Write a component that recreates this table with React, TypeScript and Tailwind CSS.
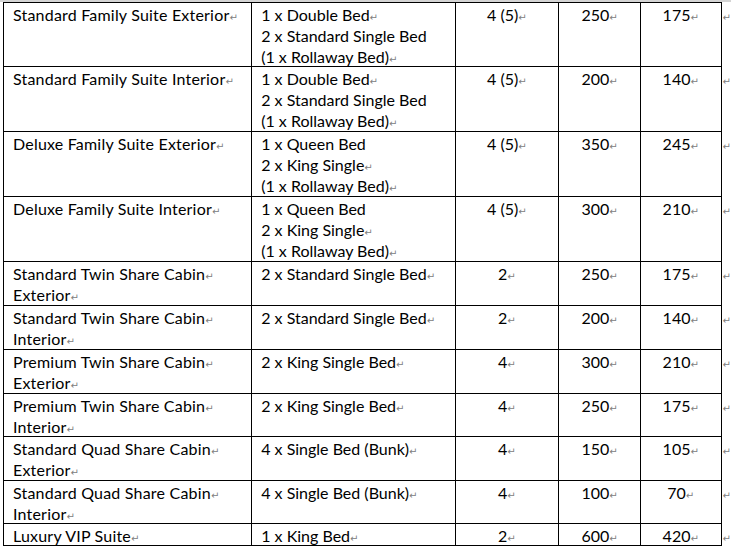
type Line = [string, boolean];

type Row = {
  name: Line[];
  beds: Line[];
  cap: string;
  price: string;
  rate: string;
  h: string;
};

const rows: Row[] = [
  {
    name: [["Standard Family Suite Exterior", true]],
    beds: [["1 x Double Bed", true], ["2 x Standard Single Bed", false], ["(1 x Rollaway Bed)", true]],
    cap: "4 (5)", price: "250", rate: "175", h: "h-[65px]",
  },
  {
    name: [["Standard Family Suite Interior", true]],
    beds: [["1 x Double Bed", true], ["2 x Standard Single Bed", false], ["(1 x Rollaway Bed)", true]],
    cap: "4 (5)", price: "200", rate: "140", h: "h-[65px]",
  },
  {
    name: [["Deluxe Family Suite Exterior", true]],
    beds: [["1 x Queen Bed", false], ["2 x King Single", true], ["(1 x Rollaway Bed)", true]],
    cap: "4 (5)", price: "350", rate: "245", h: "h-[65px]",
  },
  {
    name: [["Deluxe Family Suite Interior", true]],
    beds: [["1 x Queen Bed", false], ["2 x King Single", true], ["(1 x Rollaway Bed)", true]],
    cap: "4 (5)", price: "300", rate: "210", h: "h-[65px]",
  },
  {
    name: [["Standard Twin Share Cabin", true], ["Exterior", true]],
    beds: [["2 x Standard Single Bed", true]],
    cap: "2", price: "250", rate: "175", h: "h-[44px]",
  },
  {
    name: [["Standard Twin Share Cabin", true], ["Interior", true]],
    beds: [["2 x Standard Single Bed", true]],
    cap: "2", price: "200", rate: "140", h: "h-[44px]",
  },
  {
    name: [["Premium Twin Share Cabin", true], ["Exterior", true]],
    beds: [["2 x King Single Bed", true]],
    cap: "4", price: "300", rate: "210", h: "h-[44px]",
  },
  {
    name: [["Premium Twin Share Cabin", true], ["Interior", true]],
    beds: [["2 x King Single Bed", true]],
    cap: "4", price: "250", rate: "175", h: "h-[43px]",
  },
  {
    name: [["Standard Quad Share Cabin", true], ["Exterior", true]],
    beds: [["4 x Single Bed (Bunk)", true]],
    cap: "4", price: "150", rate: "105", h: "h-[44px]",
  },
  {
    name: [["Standard Quad Share Cabin", true], ["Interior", true]],
    beds: [["4 x Single Bed (Bunk)", true]],
    cap: "4", price: "100", rate: "70", h: "h-[43px]",
  },
  {
    name: [["Luxury VIP Suite", true]],
    beds: [["1 x King Bed", true]],
    cap: "2", price: "600", rate: "420", h: "h-[22px]",
  },
];

// paragraph mark, as Word shows it
const Mark = () => (
  <span className="text-[10px] leading-[0] text-[#808080] font-['DejaVu_Sans',sans-serif]">↵</span>
);

const Lines = ({ lines }: { lines: Line[] }) => (
  <>
    {lines.map(([text, mark], i) => (
      <div key={i} className="whitespace-nowrap h-[21px]">
        {text}
        {mark && <Mark />}
      </div>
    ))}
  </>
);

export default function App() {
  return (
    <div className="w-[731px] h-[547px] overflow-hidden bg-white text-black font-['Lato',sans-serif] text-[16px] leading-[21px]">
      <div className="h-[2px] bg-[#d4d4d4]" />
      {rows.map((row, i) => {
        const top = i === 0 ? "border-t" : "";
        return (
          <div key={i} className="flex">
            <div className={`${row.h} ${top} w-[250px] ml-[3px] box-border border-l border-r border-b border-black pl-[9px] pt-[1px] tracking-[0.2px]`}>
              <Lines lines={row.name} />
            </div>
            <div className={`${row.h} ${top} w-[204px] box-border border-r border-b border-black pl-[9px] pt-[1px]`}>
              <Lines lines={row.beds} />
            </div>
            <div className={`${row.h} ${top} w-[104px] box-border border-r border-b border-black pt-[1px] text-center`}>
              <div className="h-[21px] whitespace-nowrap">
                {row.cap}
                <Mark />
              </div>
            </div>
            <div className={`${row.h} ${top} w-[82px] box-border border-r border-b border-black pt-[1px] text-center`}>
              <div className="h-[21px] whitespace-nowrap">
                {row.price}
                <Mark />
              </div>
            </div>
            <div className={`${row.h} ${top} w-[81px] box-border border-r border-b border-black pt-[1px] text-center`}>
              <div className="h-[21px] whitespace-nowrap">
                {row.rate}
                <Mark />
              </div>
            </div>
            <div className={`${top} border-transparent pl-[1px] pt-[1px]`}>
              <div className="h-[21px]">
                <Mark />
              </div>
            </div>
          </div>
        );
      })}
    </div>
  );
}
